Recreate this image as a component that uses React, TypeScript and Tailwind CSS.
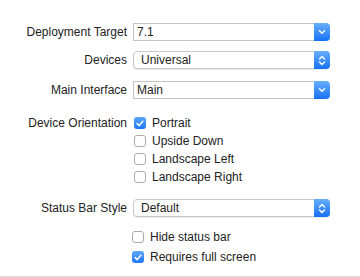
import React from 'react';

const font = { fontFamily: '"Liberation Sans", Arial, sans-serif' };

const Chevron: React.FC<{ updown?: boolean }> = ({ updown }) =>
  updown ? (
    <svg width="8" height="11" viewBox="0 0 8 11" fill="none">
      <path d="M1.5 4 L4 1.5 L6.5 4" stroke="white" strokeWidth="1.4" strokeLinecap="round" strokeLinejoin="round" />
      <path d="M1.5 7 L4 9.5 L6.5 7" stroke="white" strokeWidth="1.4" strokeLinecap="round" strokeLinejoin="round" />
    </svg>
  ) : (
    <svg width="8" height="6" viewBox="0 0 8 6" fill="none">
      <path d="M1.5 1.8 L4 4.2 L6.5 1.8" stroke="white" strokeWidth="1.4" strokeLinecap="round" strokeLinejoin="round" />
    </svg>
  );

const ComboBox: React.FC<{ value: string }> = ({ value }) => (
  <div className="flex h-[18px] w-[197px] items-stretch">
    <div className="flex flex-1 items-center border border-r-0 border-[#c4c4c4] bg-white pl-[3px] text-[12px] leading-[16px] text-[#222]">
      {value}
    </div>
    <div className="flex w-[16px] items-center justify-center rounded-r-[4px] bg-gradient-to-b from-[#66aefc] to-[#1470f6]">
      <Chevron />
    </div>
  </div>
);

const PopUp: React.FC<{ value: string }> = ({ value }) => (
  <div className="flex h-[18px] w-[197px] items-stretch rounded-[4px] border border-[#c8c8c8] bg-white shadow-[0_1px_0_rgba(0,0,0,0.08)]">
    <div className="flex flex-1 items-center pl-[7px] text-[12px] leading-[16px] text-[#222]">{value}</div>
    <div className="-my-px -mr-px flex w-[16px] items-center justify-center rounded-r-[4px] bg-gradient-to-b from-[#66aefc] to-[#1470f6]">
      <Chevron updown />
    </div>
  </div>
);

const Check: React.FC<{ label: string; checked?: boolean }> = ({ label, checked }) => (
  <div className="flex h-[18px] items-center gap-[6px]">
    {checked ? (
      <div className="flex h-[12px] w-[12px] items-center justify-center rounded-[3px] bg-gradient-to-b from-[#5ba6fc] to-[#1b76f6]">
        <svg width="8" height="7" viewBox="0 0 8 7" fill="none">
          <path d="M1.2 3.6 L3.2 5.6 L6.8 1.2" stroke="white" strokeWidth="1.5" strokeLinecap="round" strokeLinejoin="round" />
        </svg>
      </div>
    ) : (
      <div className="h-[12px] w-[12px] rounded-[3px] border border-[#aaaaaa] bg-white" />
    )}
    <span className="text-[12px] leading-[18px] text-[#222]">{label}</span>
  </div>
);

const Label: React.FC<{ children: React.ReactNode }> = ({ children }) => (
  <div className="w-[133px] pr-[6px] text-right text-[12px] leading-[18px] text-[#222]">{children}</div>
);

export default function App() {
  return (
    <div className="h-[277px] w-[360px] bg-white" style={font}>
      <div className="flex h-[276px] flex-col pt-[23px]">
        <div className="flex items-center">
          <Label>Deployment Target</Label>
          <ComboBox value="7.1" />
        </div>
        <div className="mt-[10px] flex items-center">
          <Label>Devices</Label>
          <PopUp value="Universal" />
        </div>
        <div className="mt-[12px] flex items-center">
          <Label>Main Interface</Label>
          <ComboBox value="Main" />
        </div>
        <div className="mt-[15px] flex items-start">
          <Label>Device Orientation</Label>
          <div className="flex flex-col pl-[1px]">
            <Check label="Portrait" checked />
            <Check label="Upside Down" />
            <Check label="Landscape Left" />
            <Check label="Landscape Right" />
          </div>
        </div>
        <div className="mt-[13px] flex items-center">
          <Label>Status Bar Style</Label>
          <PopUp value="Default" />
        </div>
        <div className="mt-[11px] flex flex-col gap-[2px] pl-[132px]">
          <Check label="Hide status bar" />
          <Check label="Requires full screen" checked />
        </div>
      </div>
      <div className="h-px bg-[#dcdcdc]" />
    </div>
  );
}
